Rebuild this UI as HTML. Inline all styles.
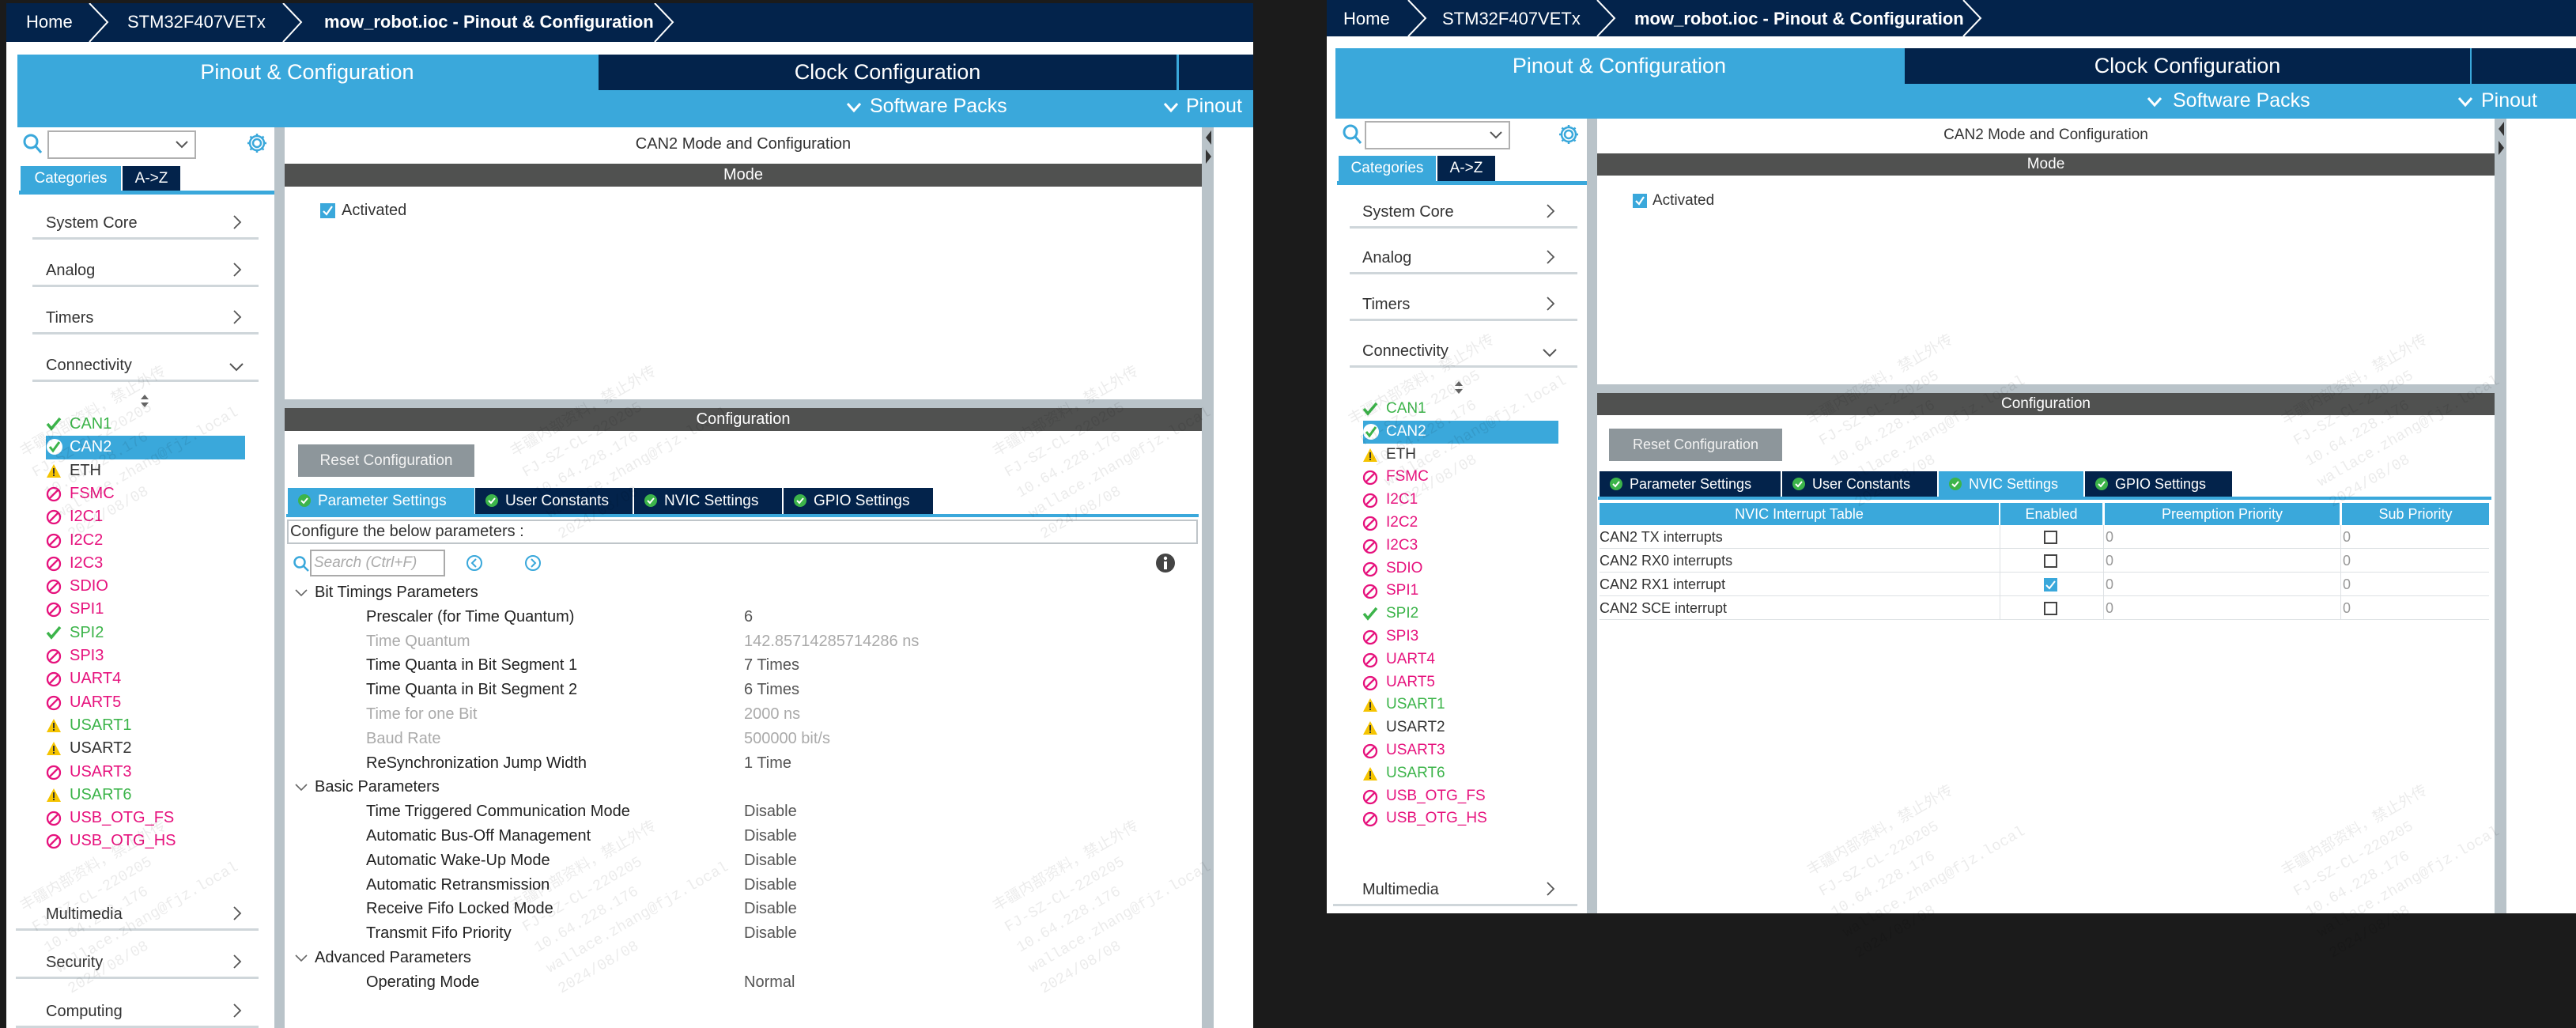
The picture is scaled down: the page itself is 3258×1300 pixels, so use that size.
<!DOCTYPE html>
<html><head><meta charset="utf-8"><style>
*{margin:0;padding:0;box-sizing:border-box}
body{width:3258px;height:1300px;background:#1b1b1b;position:relative;overflow:hidden;font-family:"Liberation Sans","Noto Sans CJK SC",sans-serif;color:#333}
.a{position:absolute}
.nav{background:#03234b}
.blue{background:#3aa8db}
.w{background:#fff}
.g{background:#b9c3c9}
.hd{background:#505150;color:#fff;text-align:center}
.bc{color:#fff;font-size:22px;white-space:nowrap}
.t{white-space:nowrap}
.it{height:24px;line-height:24px;font-size:20px;white-space:nowrap}
.it svg{position:absolute;left:0;top:3px}
.it span{position:absolute;left:30px}
.pk{color:#e6127d}.gr{color:#3cb44a}
.cat{font-size:20px;color:#333;white-space:nowrap}
.ln{height:3px;background:#cfd6da}
.tab{color:#fff;font-size:19px;line-height:33px;white-space:nowrap;padding-left:12px}
.tab svg{vertical-align:-3px;margin-right:8px}
.wm{color:rgba(0,0,0,0.08);font-size:19px;line-height:30px;transform:rotate(-30deg);transform-origin:left top;white-space:nowrap;font-family:"Liberation Mono","Noto Sans CJK SC",monospace}
.td{font-size:18px;white-space:nowrap}
</style></head><body>

<!-- ================= LEFT SCREENSHOT ================= -->
<div class="a w" style="left:8px;top:4px;width:1577px;height:1296px"></div>
<div class="a nav" style="left:8px;top:4px;width:1577px;height:49px"></div>
<svg class="a" style="left:8px;top:4px" width="900" height="49"><g fill="none" stroke="#fff" stroke-width="2"><polyline points="105,0 128,24 105,49"/><polyline points="350,0 373,24 350,49"/><polyline points="820,0 843,24 820,49"/></g></svg>
<div class="a bc" style="left:33px;top:15px">Home</div>
<div class="a bc" style="left:161px;top:15px">STM32F407VETx</div>
<div class="a bc" style="left:410px;top:15px;font-weight:bold">mow_robot.ioc - Pinout &amp; Configuration</div>

<div class="a blue" style="left:22px;top:69px;width:1563px;height:92px"></div>
<div class="a t" style="left:22px;top:69px;width:733px;height:45px;line-height:45px;text-align:center;color:#fff;font-size:27px">Pinout &amp; Configuration</div>
<div class="a nav" style="left:757px;top:69px;width:731px;height:45px;line-height:45px;text-align:center;color:#fff;font-size:27px">Clock Configuration</div>
<div class="a nav" style="left:1491px;top:69px;width:94px;height:45px"></div>
<svg class="a" style="left:1070px;top:128px" width="20" height="16"><polyline points="2,3 10,12 18,3" fill="none" stroke="#fff" stroke-width="3"/></svg>
<div class="a t" style="left:1100px;top:120px;color:#fff;font-size:25px">Software Packs</div>
<svg class="a" style="left:1471px;top:128px" width="20" height="16"><polyline points="2,3 10,12 18,3" fill="none" stroke="#fff" stroke-width="3"/></svg>
<div class="a t" style="left:1500px;top:120px;color:#fff;font-size:25px">Pinout</div>

<!-- left panel -->
<div class="a g" style="left:347px;top:161px;width:13px;height:1139px"></div>
<svg class="a" style="left:28px;top:168px" width="26" height="28"><circle cx="11" cy="11" r="8" fill="none" stroke="#3aa8db" stroke-width="3"/><line x1="17" y1="17" x2="24" y2="25" stroke="#3aa8db" stroke-width="3"/></svg>
<div class="a" style="left:60px;top:165px;width:188px;height:36px;border:2px solid #b0b0b0;background:#fff"></div>
<svg class="a" style="left:222px;top:177px" width="16" height="12"><polyline points="1,2 8,9 15,2" fill="none" stroke="#555" stroke-width="2"/></svg>
<svg class="a" style="left:311px;top:167px" width="28" height="28"><g fill="none" stroke="#3aa8db" stroke-width="2.5"><circle cx="14" cy="14" r="5"/><path d="M14 2v4M14 22v4M2 14h4M22 14h4M5.5 5.5l3 3M19.5 19.5l3 3M5.5 22.5l3-3M19.5 8.5l3-3"/><circle cx="14" cy="14" r="9"/></g></svg>
<div class="a blue t" style="left:26px;top:210px;width:127px;height:31px;line-height:31px;text-align:center;color:#fff;font-size:19px">Categories</div>
<div class="a nav t" style="left:155px;top:210px;width:73px;height:31px;line-height:31px;text-align:center;color:#fff;font-size:19px">A-&gt;Z</div>
<div class="a blue" style="left:24px;top:241px;width:323px;height:5px"></div>

<div id="C1"></div>
<svg class="a" style="left:177px;top:498px" width="12" height="18"><path d="M6 1L11 7H1z M6 17L11 11H1z" fill="#666"/></svg>

<div class="a blue" style="left:58px;top:551px;width:252px;height:30px"></div>

<div id="L1"></div>

<!-- middle -->
<div class="a t" style="left:360px;top:171px;width:1160px;text-align:center;font-size:20px;color:#333">CAN2 Mode and Configuration</div>
<div class="a hd" style="left:360px;top:207px;width:1160px;height:29px;line-height:29px;font-size:20px">Mode</div>
<div class="a" style="left:405px;top:257px;width:19px;height:19px;background:#3aa8db"></div>
<svg class="a" style="left:405px;top:257px" width="19" height="19"><polyline points="4,10 8,14 15,4" fill="none" stroke="#fff" stroke-width="2.2"/></svg>
<div class="a t" style="left:432px;top:255px;font-size:20px">Activated</div>
<div class="a g" style="left:360px;top:505px;width:1160px;height:11px"></div>
<div class="a hd" style="left:360px;top:516px;width:1160px;height:29px;line-height:29px;font-size:20px">Configuration</div>
<div class="a t" style="left:377px;top:562px;width:223px;height:41px;line-height:41px;background:#8d969b;color:#f2f2f2;font-size:19px;text-align:center">Reset Configuration</div>

<div class="a blue tab" style="left:364px;top:617px;width:236px;height:33px"><svg width="18" height="18"><circle cx="9" cy="9" r="8" fill="#3cb44a"/><polyline points="5,9 8,12 13,6" fill="none" stroke="#fff" stroke-width="2"/></svg>Parameter Settings</div>
<div class="a nav tab" style="left:601px;top:617px;width:199px;height:33px"><svg width="18" height="18"><circle cx="9" cy="9" r="8" fill="#3cb44a"/><polyline points="5,9 8,12 13,6" fill="none" stroke="#fff" stroke-width="2"/></svg>User Constants</div>
<div class="a nav tab" style="left:802px;top:617px;width:187px;height:33px"><svg width="18" height="18"><circle cx="9" cy="9" r="8" fill="#3cb44a"/><polyline points="5,9 8,12 13,6" fill="none" stroke="#fff" stroke-width="2"/></svg>NVIC Settings</div>
<div class="a nav tab" style="left:991px;top:617px;width:189px;height:33px"><svg width="18" height="18"><circle cx="9" cy="9" r="8" fill="#3cb44a"/><polyline points="5,9 8,12 13,6" fill="none" stroke="#fff" stroke-width="2"/></svg>GPIO Settings</div>
<div class="a blue" style="left:362px;top:650px;width:1154px;height:4px"></div>
<div class="a t" style="left:363px;top:657px;width:1152px;height:31px;border:2px solid #bfc5c9;font-size:20px;line-height:27px;padding-left:2px">Configure the below parameters :</div>
<svg class="a" style="left:370px;top:702px" width="22" height="22"><circle cx="9" cy="9" r="6.5" fill="none" stroke="#3aa8db" stroke-width="2.5"/><line x1="14" y1="14" x2="20" y2="20" stroke="#3aa8db" stroke-width="2.5"/></svg>
<div class="a t" style="left:392px;top:695px;width:171px;height:34px;border:2px solid #aaa;font-size:19px;line-height:30px;color:#aaa;font-style:italic;padding-left:3px">Search (Ctrl+F)</div>
<svg class="a" style="left:589px;top:701px" width="22" height="22"><circle cx="11" cy="11" r="9" fill="none" stroke="#3aa8db" stroke-width="2"/><polyline points="13,6 8,11 13,16" fill="none" stroke="#3aa8db" stroke-width="2"/></svg>
<svg class="a" style="left:663px;top:701px" width="22" height="22"><circle cx="11" cy="11" r="9" fill="none" stroke="#3aa8db" stroke-width="2"/><polyline points="9,6 14,11 9,16" fill="none" stroke="#3aa8db" stroke-width="2"/></svg>
<svg class="a" style="left:1461px;top:699px" width="26" height="26"><circle cx="13" cy="13" r="12" fill="#444"/><rect x="11" y="11" width="4" height="10" fill="#fff"/><circle cx="13" cy="7" r="2.2" fill="#fff"/></svg>

<div id="T1"></div>

<div class="a g" style="left:1520px;top:161px;width:15px;height:1139px"></div>
<svg class="a" style="left:1520px;top:163px" width="15" height="50"><path d="M12 2L5 11L12 20z M5 26L12 35L5 44z" fill="#333"/></svg>

<!-- ================= RIGHT SCREENSHOT ================= -->
<div class="a w" style="left:1678px;top:0;width:1580px;height:1155px"></div>
<div class="a nav" style="left:1678px;top:0;width:1580px;height:46px"></div>
<svg class="a" style="left:1678px;top:0" width="900" height="46"><g fill="none" stroke="#fff" stroke-width="2"><polyline points="103,0 125,23 103,46"/><polyline points="342,0 364,23 342,46"/><polyline points="805,0 827,23 805,46"/></g></svg>
<div class="a bc" style="left:1699px;top:11px">Home</div>
<div class="a bc" style="left:1824px;top:11px">STM32F407VETx</div>
<div class="a bc" style="left:2067px;top:11px;font-weight:bold">mow_robot.ioc - Pinout &amp; Configuration</div>

<div class="a blue" style="left:1689px;top:61px;width:1569px;height:89px"></div>
<div class="a t" style="left:1689px;top:61px;width:718px;height:45px;line-height:45px;text-align:center;color:#fff;font-size:27px">Pinout &amp; Configuration</div>
<div class="a nav" style="left:2409px;top:61px;width:715px;height:45px;line-height:45px;text-align:center;color:#fff;font-size:27px">Clock Configuration</div>
<div class="a nav" style="left:3126px;top:61px;width:132px;height:45px"></div>
<svg class="a" style="left:2715px;top:121px" width="20" height="16"><polyline points="2,3 10,12 18,3" fill="none" stroke="#fff" stroke-width="3"/></svg>
<div class="a t" style="left:2748px;top:113px;color:#fff;font-size:25px">Software Packs</div>
<svg class="a" style="left:3108px;top:121px" width="20" height="16"><polyline points="2,3 10,12 18,3" fill="none" stroke="#fff" stroke-width="3"/></svg>
<div class="a t" style="left:3138px;top:113px;color:#fff;font-size:25px">Pinout</div>

<div class="a g" style="left:2007px;top:150px;width:13px;height:1005px"></div>
<svg class="a" style="left:1697px;top:156px" width="26" height="28"><circle cx="11" cy="11" r="8" fill="none" stroke="#3aa8db" stroke-width="3"/><line x1="17" y1="17" x2="24" y2="25" stroke="#3aa8db" stroke-width="3"/></svg>
<div class="a" style="left:1726px;top:153px;width:184px;height:36px;border:2px solid #b0b0b0;background:#fff"></div>
<svg class="a" style="left:1884px;top:165px" width="16" height="12"><polyline points="1,2 8,9 15,2" fill="none" stroke="#555" stroke-width="2"/></svg>
<svg class="a" style="left:1970px;top:156px" width="28" height="28"><g fill="none" stroke="#3aa8db" stroke-width="2.5"><circle cx="14" cy="14" r="5"/><path d="M14 2v4M14 22v4M2 14h4M22 14h4M5.5 5.5l3 3M19.5 19.5l3 3M5.5 22.5l3-3M19.5 8.5l3-3"/><circle cx="14" cy="14" r="9"/></g></svg>
<div class="a blue t" style="left:1693px;top:197px;width:123px;height:32px;line-height:32px;text-align:center;color:#fff;font-size:19px">Categories</div>
<div class="a nav t" style="left:1818px;top:197px;width:73px;height:32px;line-height:32px;text-align:center;color:#fff;font-size:19px">A-&gt;Z</div>
<div class="a blue" style="left:1691px;top:229px;width:316px;height:5px"></div>

<div id="C2"></div>
<svg class="a" style="left:1839px;top:481px" width="12" height="18"><path d="M6 1L11 7H1z M6 17L11 11H1z" fill="#666"/></svg>
<div class="a blue" style="left:1724px;top:532px;width:247px;height:29px"></div>

<div id="L2"></div>

<div class="a t" style="left:2020px;top:160px;width:1135px;text-align:center;font-size:19px">CAN2 Mode and Configuration</div>
<div class="a hd" style="left:2020px;top:194px;width:1135px;height:28px;line-height:28px;font-size:19px">Mode</div>
<div class="a" style="left:2065px;top:245px;width:18px;height:18px;background:#3aa8db"></div>
<svg class="a" style="left:2065px;top:245px" width="18" height="18"><polyline points="4,9 8,13 14,4" fill="none" stroke="#fff" stroke-width="2.2"/></svg>
<div class="a t" style="left:2090px;top:243px;font-size:19px">Activated</div>
<div class="a g" style="left:2020px;top:486px;width:1135px;height:11px"></div>
<div class="a hd" style="left:2020px;top:497px;width:1135px;height:28px;line-height:28px;font-size:19px">Configuration</div>
<div class="a t" style="left:2035px;top:542px;width:219px;height:41px;line-height:41px;background:#8d969b;color:#f2f2f2;font-size:18px;text-align:center">Reset Configuration</div>

<div class="a nav tab" style="left:2023px;top:596px;width:229px;height:32px;font-size:18px;line-height:32px"><svg width="18" height="18"><circle cx="9" cy="9" r="8" fill="#3cb44a"/><polyline points="5,9 8,12 13,6" fill="none" stroke="#fff" stroke-width="2"/></svg>Parameter Settings</div>
<div class="a nav tab" style="left:2254px;top:596px;width:196px;height:32px;font-size:18px;line-height:32px"><svg width="18" height="18"><circle cx="9" cy="9" r="8" fill="#3cb44a"/><polyline points="5,9 8,12 13,6" fill="none" stroke="#fff" stroke-width="2"/></svg>User Constants</div>
<div class="a blue tab" style="left:2452px;top:596px;width:183px;height:32px;font-size:18px;line-height:32px"><svg width="18" height="18"><circle cx="9" cy="9" r="8" fill="#3cb44a"/><polyline points="5,9 8,12 13,6" fill="none" stroke="#fff" stroke-width="2"/></svg>NVIC Settings</div>
<div class="a nav tab" style="left:2637px;top:596px;width:186px;height:32px;font-size:18px;line-height:32px"><svg width="18" height="18"><circle cx="9" cy="9" r="8" fill="#3cb44a"/><polyline points="5,9 8,12 13,6" fill="none" stroke="#fff" stroke-width="2"/></svg>GPIO Settings</div>
<div class="a blue" style="left:2021px;top:628px;width:1130px;height:4px"></div>

<div class="a blue td" style="left:2023px;top:636px;width:505px;height:28px;line-height:28px;text-align:center;color:#fff">NVIC Interrupt Table</div>
<div class="a blue td" style="left:2530px;top:636px;width:129px;height:28px;line-height:28px;text-align:center;color:#fff">Enabled</div>
<div class="a blue td" style="left:2662px;top:636px;width:297px;height:28px;line-height:28px;text-align:center;color:#fff">Preemption Priority</div>
<div class="a blue td" style="left:2962px;top:636px;width:186px;height:28px;line-height:28px;text-align:center;color:#fff">Sub Priority</div>

<div id="NV"></div>

<div class="a g" style="left:3155px;top:150px;width:15px;height:1005px"></div>
<svg class="a" style="left:3155px;top:152px" width="15" height="50"><path d="M12 2L5 11L12 20z M5 26L12 35L5 44z" fill="#333"/></svg>

<!-- watermarks -->
<div class="a wm" style="left:20px;top:560px">丰疆内部资料，禁止外传<br>FJ-SZ-CL-220205<br>10.64.228.176<br>wallace.zhang@fjz.local<br>2024/08/08</div>
<div class="a wm" style="left:640px;top:560px">丰疆内部资料，禁止外传<br>FJ-SZ-CL-220205<br>10.64.228.176<br>wallace.zhang@fjz.local<br>2024/08/08</div>
<div class="a wm" style="left:1250px;top:560px">丰疆内部资料，禁止外传<br>FJ-SZ-CL-220205<br>10.64.228.176<br>wallace.zhang@fjz.local<br>2024/08/08</div>
<div class="a wm" style="left:20px;top:1135px">丰疆内部资料，禁止外传<br>FJ-SZ-CL-220205<br>10.64.228.176<br>wallace.zhang@fjz.local<br>2024/08/08</div>
<div class="a wm" style="left:640px;top:1135px">丰疆内部资料，禁止外传<br>FJ-SZ-CL-220205<br>10.64.228.176<br>wallace.zhang@fjz.local<br>2024/08/08</div>
<div class="a wm" style="left:1250px;top:1135px">丰疆内部资料，禁止外传<br>FJ-SZ-CL-220205<br>10.64.228.176<br>wallace.zhang@fjz.local<br>2024/08/08</div>
<div class="a wm" style="left:1700px;top:520px">丰疆内部资料，禁止外传<br>FJ-SZ-CL-220205<br>10.64.228.176<br>wallace.zhang@fjz.local<br>2024/08/08</div>
<div class="a wm" style="left:2280px;top:520px">丰疆内部资料，禁止外传<br>FJ-SZ-CL-220205<br>10.64.228.176<br>wallace.zhang@fjz.local<br>2024/08/08</div>
<div class="a wm" style="left:2880px;top:520px">丰疆内部资料，禁止外传<br>FJ-SZ-CL-220205<br>10.64.228.176<br>wallace.zhang@fjz.local<br>2024/08/08</div>
<div class="a wm" style="left:2280px;top:1090px">丰疆内部资料，禁止外传<br>FJ-SZ-CL-220205<br>10.64.228.176<br>wallace.zhang@fjz.local<br>2024/08/08</div>
<div class="a wm" style="left:2880px;top:1090px">丰疆内部资料，禁止外传<br>FJ-SZ-CL-220205<br>10.64.228.176<br>wallace.zhang@fjz.local<br>2024/08/08</div>

<script>
(function(){
function cats(id,x,chx,lx,lw,arr){
 var h='';
 arr.forEach(function(c){
  var y=c[1];
  h+='<div class="a cat" style="left:'+x+'px;top:'+(y-12)+'px">'+c[0]+'</div>';
  if(c[2]) h+='<svg class="a" style="left:'+(chx-4)+'px;top:'+(y-5)+'px" width="18" height="12"><polyline points="1,2 9,10 17,2" fill="none" stroke="#555" stroke-width="2"/></svg>';
  else h+='<svg class="a" style="left:'+chx+'px;top:'+(y-12)+'px" width="12" height="20"><polyline points="2,2 10,10 2,18" fill="none" stroke="#555" stroke-width="1.8"/></svg>';
  h+='<div class="a ln" style="left:'+(c[3]||lx)+'px;top:'+(y+17)+'px;width:'+(c[4]||lw)+'px"></div>';
 });
 document.getElementById(id).outerHTML=h;
}
cats("C1",58,294,41,286,[["System Core",283],["Analog",343],["Timers",403],["Connectivity",463,1],["Multimedia",1157,0,20,307],["Security",1218,0,20,307],["Computing",1280,0,20,307]]);
cats("C2",1723,1955,1707,288,[["System Core",269],["Analog",327],["Timers",386],["Connectivity",445,1],["Multimedia",1126,0,1686,309]]);
var items=[["CAN1","ok","gr"],["CAN2","sel",""],["ETH","warn",""],["FSMC","no","pk"],["I2C1","no","pk"],["I2C2","no","pk"],["I2C3","no","pk"],["SDIO","no","pk"],["SPI1","no","pk"],["SPI2","ok","gr"],["SPI3","no","pk"],["UART4","no","pk"],["UART5","no","pk"],["USART1","warn","gr"],["USART2","warn",""],["USART3","no","pk"],["USART6","warn","gr"],["USB_OTG_FS","no","pk"],["USB_OTG_HS","no","pk"]];
function icon(k){
 if(k=="ok")return '<svg width="20" height="18"><polyline points="2,9 7,15 18,2" fill="none" stroke="#3cb44a" stroke-width="3.5"/></svg>';
 if(k=="sel")return '<svg width="22" height="22" style="top:1px"><circle cx="11" cy="11" r="10" fill="#fff"/><polyline points="5,11 9,16 17,5" fill="none" stroke="#3cb44a" stroke-width="3"/></svg>';
 if(k=="warn")return '<svg width="20" height="19"><path d="M10 1L19 18H1z" fill="#f5c400"/><rect x="9" y="6" width="2" height="7" fill="#333"/><rect x="9" y="14" width="2" height="2" fill="#333"/></svg>';
 return '<svg width="20" height="20"><circle cx="10" cy="10" r="8" fill="none" stroke="#e6127d" stroke-width="2.3"/><line x1="4.5" y1="15.5" x2="15.5" y2="4.5" stroke="#e6127d" stroke-width="2.3"/></svg>';
}
function list(id,x,y0,st,fs){
 var h='';
 items.forEach(function(it,i){
  var c=it[1]=="sel"?'style="color:#fff"':'';
  h+='<div class="a it '+it[2]+'" style="left:'+x+'px;top:'+(y0+st*i-12)+'px;font-size:'+fs+'px"><span></span>'+icon(it[1])+'<span '+c+'>'+it[0]+'</span></div>';
 });
 document.getElementById(id).outerHTML=h;
}
list("L1",58,536,29.3,20);
list("L2",1723,517,28.8,19);
var rows=[["h","Bit Timings Parameters"],["","Prescaler (for Time Quantum)","6"],["d","Time Quantum","142.85714285714286 ns"],["","Time Quanta in Bit Segment 1","7 Times"],["","Time Quanta in Bit Segment 2","6 Times"],["d","Time for one Bit","2000 ns"],["d","Baud Rate","500000 bit/s"],["","ReSynchronization Jump Width","1 Time"],["h","Basic Parameters"],["","Time Triggered Communication Mode","Disable"],["","Automatic Bus-Off Management","Disable"],["","Automatic Wake-Up Mode","Disable"],["","Automatic Retransmission","Disable"],["","Receive Fifo Locked Mode","Disable"],["","Transmit Fifo Priority","Disable"],["h","Advanced Parameters"],["","Operating Mode","Normal"]];
var h='';
rows.forEach(function(r,i){
 var y=749+30.8*i-12;
 if(r[0]=="h"){
  h+='<svg class="a" style="left:373px;top:'+(y+8)+'px" width="16" height="10"><polyline points="1,1 8,8 15,1" fill="none" stroke="#666" stroke-width="1.6"/></svg>';
  h+='<div class="a t" style="left:398px;top:'+y+'px;font-size:20px;line-height:24px;color:#222">'+r[1]+'</div>';
 } else {
  var c=r[0]=="d"?"#aaa":"#222";var c2=r[0]=="d"?"#aaa":"#555";
  h+='<div class="a t" style="left:463px;top:'+y+'px;font-size:20px;line-height:24px;color:'+c+'">'+r[1]+'</div>';
  h+='<div class="a t" style="left:941px;top:'+y+'px;font-size:20px;line-height:24px;color:'+c2+'">'+r[2]+'</div>';
 }
});
document.getElementById("T1").outerHTML=h;
var nv=["CAN2 TX interrupts","CAN2 RX0 interrupts","CAN2 RX1 interrupt","CAN2 SCE interrupt"];
h='';
nv.forEach(function(t,i){
 var y=664+30*i;
 h+='<div class="a" style="left:2023px;top:'+(y+29)+'px;width:1125px;height:1px;background:#dde1e4"></div>';
 h+='<div class="a" style="left:2529px;top:'+y+'px;width:1px;height:30px;background:#dde1e4"></div>';
 h+='<div class="a" style="left:2660px;top:'+y+'px;width:1px;height:30px;background:#dde1e4"></div>';
 h+='<div class="a" style="left:2960px;top:'+y+'px;width:1px;height:30px;background:#dde1e4"></div>';
 h+='<div class="a td" style="left:2023px;top:'+(y+4)+'px;line-height:22px">'+t+'</div>';
 if(i==2) h+='<div class="a" style="left:2585px;top:'+(y+7)+'px;width:17px;height:17px;background:#3aa8db"></div><svg class="a" style="left:2585px;top:'+(y+7)+'px" width="17" height="17"><polyline points="3,9 7,13 14,4" fill="none" stroke="#fff" stroke-width="2"/></svg>';
 else h+='<div class="a" style="left:2585px;top:'+(y+7)+'px;width:17px;height:17px;border:2px solid #444;background:#fff"></div>';
 h+='<div class="a td" style="left:2663px;top:'+(y+4)+'px;line-height:22px;color:#999">0</div>';
 h+='<div class="a td" style="left:2963px;top:'+(y+4)+'px;line-height:22px;color:#999">0</div>';
});
document.getElementById("NV").outerHTML=h;
})();
</script>
</body></html>
